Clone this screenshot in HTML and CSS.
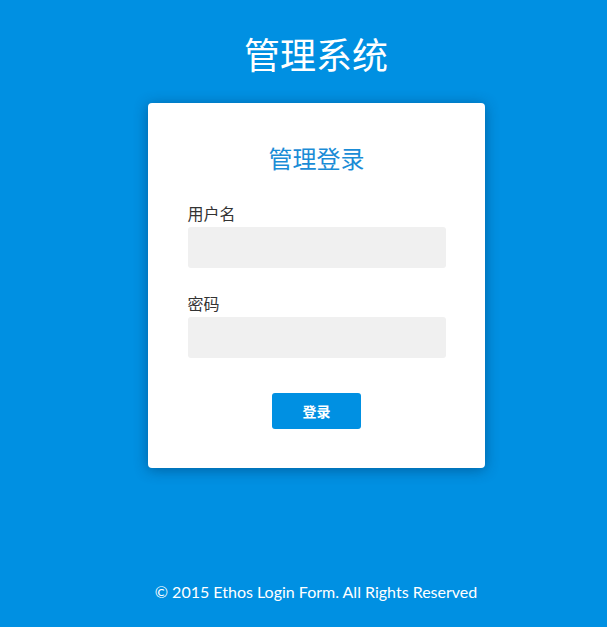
FILE: index.html
```html
<!DOCTYPE html>
<html lang="zh">
<head>
<meta charset="utf-8">
<title>管理系统</title>
<link rel="stylesheet" href="styles.css">
</head>
<body>
<div class="page">
  <h1 class="site-title">管理系统</h1>
  <div class="card">
    <h2 class="card-title">管理登录</h2>
    <form class="form">
      <label class="label" for="user">用户名</label>
      <input class="input" id="user" type="text">
      <label class="label label-second" for="pass">密码</label>
      <input class="input" id="pass" type="password">
      <div class="actions">
        <button class="btn" type="button">登录</button>
      </div>
    </form>
  </div>
  <p class="footer">© 2015 Ethos Login Form. All Rights Reserved</p>
</div>
</body>
</html>
```
FILE: styles.css
```css
html, body {
  margin: 0;
  padding: 0;
  height: 100%;
}
body {
  background: #0090e2;
  font-family: "Lato", "Noto Sans CJK SC", sans-serif;
  color: #333;
}
.page {
  margin-left: 25px;
  display: flex;
  flex-direction: column;
  align-items: center;
}
.site-title {
  margin: 31px 0 0;
  font-size: 36px;
  font-weight: 400;
  line-height: 44px;
  color: #fff;
  font-family: "Noto Sans CJK SC", sans-serif;
}
.card {
  margin-top: 28px;
  width: 337px;
  height: 365px;
  box-sizing: border-box;
  background: #fff;
  border-radius: 4px;
  box-shadow: 0 2px 14px rgba(0, 40, 80, 0.45);
  padding: 0 39px 0 40px;
}
.card-title {
  margin: 38px 0 0;
  text-align: center;
  font-size: 24px;
  font-weight: 400;
  line-height: 34px;
  color: #1a8cd6;
  font-family: "Noto Sans CJK SC", sans-serif;
}
.form {
  margin-top: 28px;
  display: flex;
  flex-direction: column;
}
.label {
  font-size: 16px;
  line-height: 20px;
  color: #333;
  font-family: "Noto Sans CJK SC", sans-serif;
  margin-bottom: 4px;
}
.label-second {
  margin-top: 25px;
}
.input {
  display: block;
  width: 258px;
  height: 41px;
  box-sizing: border-box;
  border: none;
  border-radius: 3px;
  background: #f0f0f0;
  outline: none;
  padding: 0 10px;
  font-size: 14px;
}
.actions {
  display: flex;
  justify-content: center;
  margin-top: 35px;
}
.btn {
  width: 89px;
  height: 36px;
  border: none;
  border-radius: 3px;
  background: #0090e2;
  color: #fff;
  font-size: 14px;
  font-weight: 700;
  font-family: "Noto Sans CJK SC", sans-serif;
  cursor: pointer;
  padding: 0;
}
.footer {
  margin: 113px 0 0;
  font-size: 16px;
  line-height: 22px;
  color: #fff;
}
```
